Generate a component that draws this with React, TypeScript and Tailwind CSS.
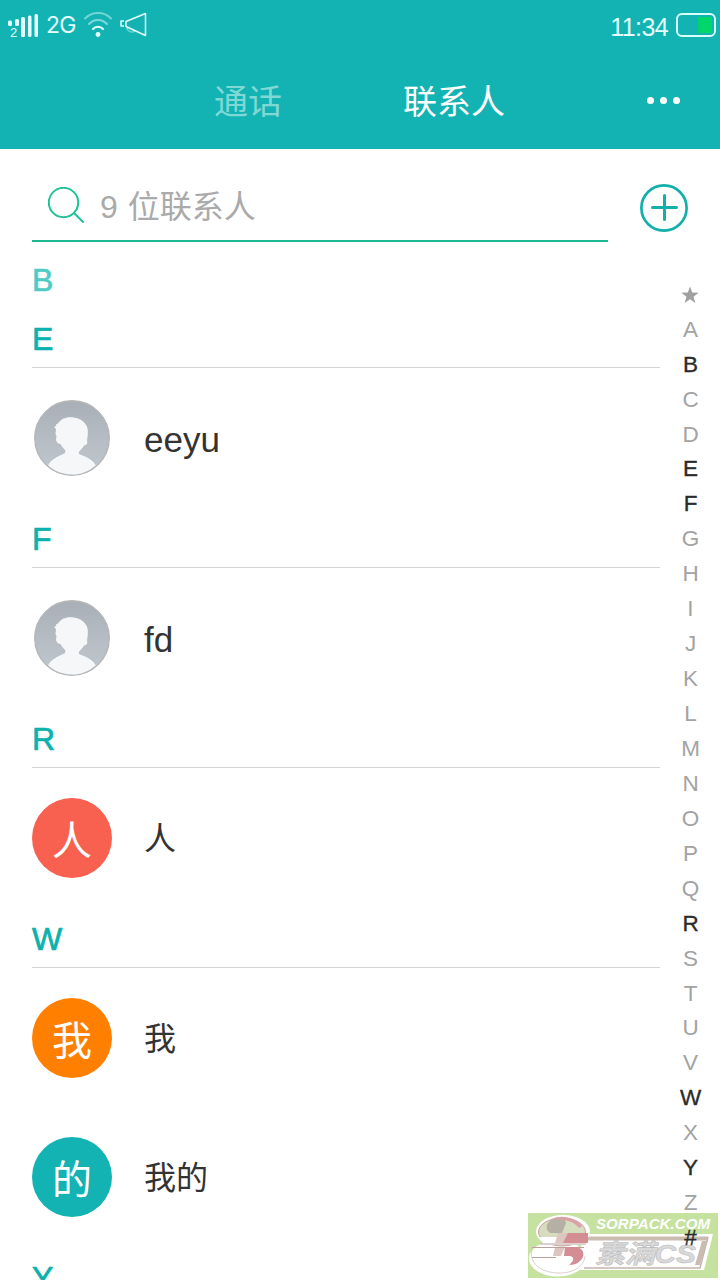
const CJK = "font-['Liberation_Sans','Noto_Sans_CJK_SC',sans-serif]";
const LATIN = "font-['Liberation_Sans',sans-serif]";

interface Contact {
  name: string;
  initial?: string;
  color?: string;
}

interface Section {
  letter: string;
  contacts: Contact[];
}

const sections: Section[] = [
  { letter: "E", contacts: [{ name: "eeyu" }] },
  { letter: "F", contacts: [{ name: "fd" }] },
  { letter: "R", contacts: [{ name: "人", initial: "人", color: "bg-[#f8614f]" }] },
  {
    letter: "W",
    contacts: [
      { name: "我", initial: "我", color: "bg-[#ff8000]" },
      { name: "我的", initial: "的", color: "bg-[#13b3b3]" },
    ],
  },
];

const indexLetters = "ABCDEFGHIJKLMNOPQRSTUVWXYZ#".split("");
const activeLetters = "BEFRWY#";

function StatusBar() {
  return (
    <div className="flex h-[50px] items-center justify-between pl-2 pr-1 text-[#e4ffff]">
      <div className="flex items-center">
        <svg width="32" height="28" viewBox="0 0 32 28" fill="currentColor">
          <rect x="0" y="9.500" width="4" height="5.500" rx="1.500" />
          <rect x="7" y="8" width="4" height="7" rx="1.500" />
          <rect x="13" y="6" width="4" height="20" rx="1.500" />
          <rect x="20" y="4.500" width="3.500" height="21.500" rx="1.500" />
          <rect x="26.500" y="3" width="3.500" height="23" rx="1.500" />
          <text x="2" y="26" fontSize="13" fontFamily="Liberation Sans, sans-serif">
            2
          </text>
        </svg>
        <span className="ml-[6px] w-[36px] font-['Inter',sans-serif] text-[23px] leading-none tracking-[-0.8px]">2G</span>
        <svg className="ml-[2px]" width="28" height="28" viewBox="0 0 28 28" fill="none" stroke="currentColor" strokeWidth="2" strokeLinecap="round">
          <path d="M1 7.500C8 0 20 0 27 7.500" opacity=".45" />
          <path d="M5 13C10 7.500 18 7.500 23 13" opacity=".5" />
          <path d="M9 18C11.500 15 16.500 15 19 18" />
          <circle cx="14" cy="23.500" r="2.400" fill="currentColor" stroke="none" />
        </svg>
        <svg className="ml-2" width="27" height="28" viewBox="0 0 27 28" fill="none" stroke="currentColor" strokeWidth="1.500" strokeLinejoin="round">
          <path d="M25.500 2.500v22L6 15.500v-5z" />
          <path d="M4 10H1v5h3" />
          <path d="M7 17c.5 4 6 5 8 3" opacity=".4" />
        </svg>
      </div>
      <div className="flex items-center">
        <span className={`mt-[4px] text-[25px] leading-none tracking-[-0.6px] ${LATIN}`}>11:34</span>
        <div className="ml-2 flex h-6 w-10 justify-end rounded-[6px] border-2 border-[#d8ffff] p-[2px]">
          <div className="h-4 w-[14px] bg-[#00d66b]" />
        </div>
      </div>
    </div>
  );
}

function TabBar() {
  return (
    <div className={`flex h-[99px] items-center pt-1 text-[34px] leading-[50px] ${CJK}`}>
      <div className="ml-[214px] w-[189px] text-[#7fd8d6]">通话</div>
      <div className="w-[244px] text-white">联系人</div>
      <div className="-mt-[2px] flex gap-[6px]">
        <i className="size-[7px] rounded-full bg-white" />
        <i className="size-[7px] rounded-full bg-white" />
        <i className="size-[7px] rounded-full bg-white" />
      </div>
    </div>
  );
}

function SearchBar() {
  return (
    <div className="flex h-[93px] pl-8 pt-[35px]">
      <div className={`flex h-[58px] w-[576px] border-b-2 border-[#1db992] pl-4 text-[32px] leading-[46px] text-[#aaaaaa] ${CJK}`}>
        <svg className="mt-[3px]" width="38" height="38" viewBox="0 0 38 38" fill="none" stroke="#1dc296" strokeWidth="2">
          <circle cx="15.500" cy="15.500" r="14.700" />
          <path d="M26 26l9 9" strokeLinecap="round" />
        </svg>
        <span className="ml-[14px] [word-spacing:1px]">9 位联系人</span>
      </div>
      <svg className="ml-8" width="48" height="48" viewBox="0 0 48 48" fill="none" stroke="#13b0ab">
        <circle cx="24" cy="24" r="22.600" strokeWidth="2.700" />
        <path d="M12.500 23.500h24M24.500 11.500v24" strokeWidth="3" strokeLinecap="round" />
      </svg>
    </div>
  );
}

function DefaultAvatar() {
  return (
    <svg className="mx-[2px]" width="76" height="76" viewBox="0 0 76 76">
      <defs>
        <linearGradient id="avatar" x1="0" y1="0" x2="0" y2="1">
          <stop offset="0" stopColor="#a9afb7" />
          <stop offset="1" stopColor="#c0c8ce" />
        </linearGradient>
      </defs>
      <circle cx="38" cy="38" r="37.300" fill="url(#avatar)" stroke="#b6b6b5" strokeWidth="1.300" />
      <path
        fill="#f5f7f9"
        d="M14 65c3-5 8-8 13-10 4-1 5-3 4-5-2-2-3.500-4-4.500-6-3 0-4.500-3-4.500-5l.5-3-1-2 .5-5-2-2 2-1 .3-2 1.500-.3c3-5 8-7 14-6.500 9 .5 15.500 6 16 13 .2 4-.2 7-.8 10 1 3-.5 5-2.700 5-1 2-3 4-5 6-1 2-.5 3 2.500 4 6 2 11 5 14 10C55 71 47 74.500 38 74.500S20 71 14 65z"
      />
    </svg>
  );
}

function ContactRow({ contact }: { contact: Contact }) {
  return (
    <div className={`flex h-[139px] items-center text-[#333333] ${CJK}`}>
      {contact.initial ? (
        <div className={`flex size-20 items-center justify-center rounded-full pt-[6px] text-[40px] leading-none text-white ${contact.color}`}>
          {contact.initial}
        </div>
      ) : (
        <DefaultAvatar />
      )}
      <span className={contact.initial ? "ml-8 mt-[2px] text-[32px] leading-[46px]" : "ml-8 mt-1 text-[35px] leading-[46px]"}>
        {contact.name}
      </span>
    </div>
  );
}

function SectionHeader({ letter }: { letter: string }) {
  return (
    <div className={`h-[61px] border-b border-[#d3d3d3] pt-[9px] text-[32px] leading-[46px] text-[#0cb1ae] [-webkit-text-stroke:0.7px_#0cb1ae] ${LATIN}`}>
      {letter}
    </div>
  );
}

function IndexBar() {
  return (
    <div className={`absolute right-0 top-[277px] flex w-[60px] flex-col items-center text-[22.500px] text-[#a3a3a3] ${LATIN}`}>
      <div className="flex h-[35.500px] items-center">
        <svg width="18" height="18" viewBox="0 0 18 18" fill="#a0a0a0">
          <path d="M9 .5l2.200 6.100 6.500.2-5.200 4 1.900 6.200L9 13.300l-5.400 3.700 1.900-6.200-5.200-4 6.500-.2z" />
        </svg>
      </div>
      {indexLetters.map((letter) => (
        <div
          key={letter}
          className={`flex h-[34.950px] items-center pl-px leading-none ${activeLetters.includes(letter) ? "text-[#2b2b2b] [-webkit-text-stroke:0.35px_#2b2b2b]" : ""}`}
        >
          {letter}
        </div>
      ))}
    </div>
  );
}

function Watermark() {
  return (
    <svg className="absolute left-[528px] top-[1213px]" width="190" height="65" viewBox="0 0 190 65">
      <rect width="190" height="65" fill="#c5e2a0" />
      <path d="M56 21h129l-9 36H48z" fill="#fff" />
      <path d="M60 23.500h120l-1 4H60z" fill="#cbbcb0" />
      <path d="M180 24l-8 31H56" fill="none" stroke="#c5b3b0" strokeWidth="1.500" />
      <path d="M174 28h5l-7 24h-5z" fill="#cbbcb0" />
      <ellipse cx="35" cy="18.500" rx="27" ry="16.500" fill="#fff" />
      <ellipse cx="29.500" cy="45.500" rx="28.500" ry="18" fill="#fff" />
      <ellipse cx="34" cy="19" rx="23.500" ry="14" fill="#d6dcbe" stroke="#cf9fa0" strokeWidth="1" />
      <path d="M19 12c2-5 8-8 17-8l2 6-4 10h-12c-3-2-4-5-3-8z" fill="#b5b0a6" />
      <path d="M24 6c10-5 24-1 30 7l-3 2C46 8 36 6 24 6z" fill="#dba0a2" />
      <path d="M12 24h48v8H16z" fill="#fff" />
      <path d="M34 20h26v10H32z" fill="#d38d93" />
      <path d="M30 20h10l-5 10h-8zM27 34h10l-4 9h-8z" fill="#ddc5c0" />
      <path d="M12 31h46M4 34.500h52M4 44.500h24" fill="none" stroke="#b9a1a0" strokeWidth="1" />
      <path d="M37 34h12c8 2 8 10 3 14-3 3-7 4-11 4 5-4 6-8 1-9h-6z" fill="#d38d93" />
      <path d="M4 35c-3 12 4 23 24 25 16 1 28-6 29-17" fill="none" stroke="#ccbcb8" strokeWidth=".7" />
      <g fontFamily="Liberation Sans, Noto Sans CJK SC, sans-serif" fontWeight="bold" fontStyle="italic">
        <text x="68" y="16" fontSize="14" fill="#fff" textLength="114" lengthAdjust="spacingAndGlyphs">SORPACK.COM</text>
        <text x="67" y="50" fontSize="26" fill="#d9d9d9" stroke="#bdbdbd" strokeWidth=".6" textLength="101" lengthAdjust="spacingAndGlyphs">素满CS</text>
      </g>
    </svg>
  );
}

export default function App() {
  return (
    <div className="relative h-[1280px] w-[720px] overflow-hidden bg-white">
      <header className="h-[149px] bg-[#13b3b3]">
        <StatusBar />
        <TabBar />
      </header>
      <SearchBar />
      <main className="ml-8 w-[628px]">
        <div className={`h-[65px] pt-[15px] text-[32px] leading-[46px] text-[#50cac5] [-webkit-text-stroke:0.7px_#50cac5] ${LATIN}`}>B</div>
        {sections.map((section) => (
          <section key={section.letter}>
            <SectionHeader letter={section.letter} />
            {section.contacts.map((contact) => (
              <ContactRow key={contact.name} contact={contact} />
            ))}
          </section>
        ))}
        <SectionHeader letter="Y" />
      </main>
      <Watermark />
      <IndexBar />
    </div>
  );
}
